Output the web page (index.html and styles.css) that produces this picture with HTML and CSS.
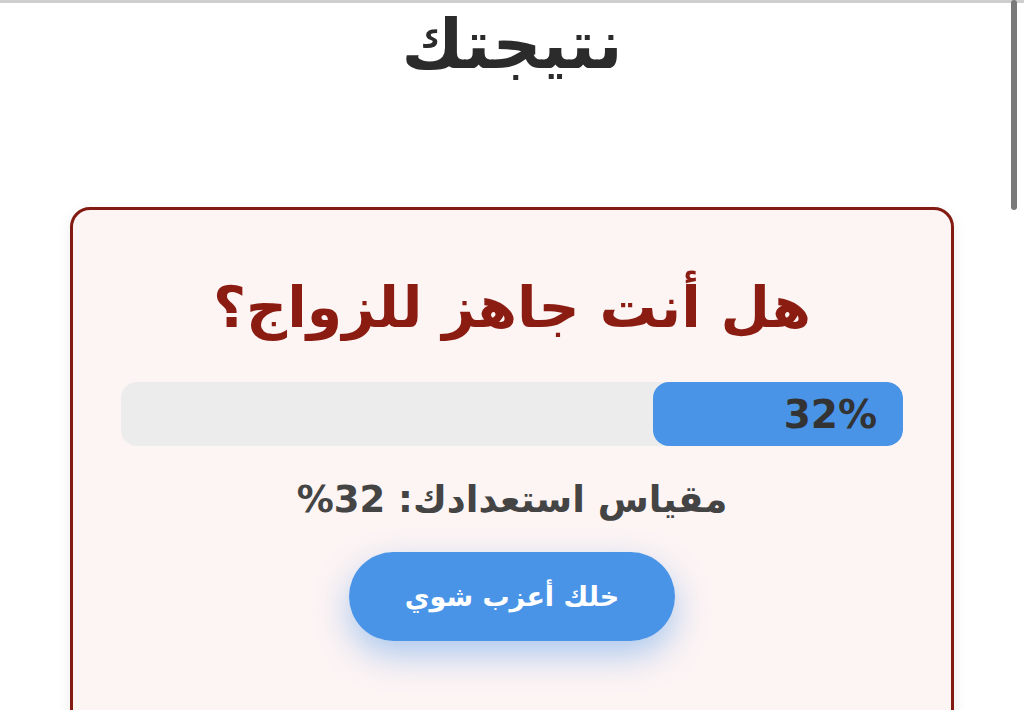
FILE: index.html
```html
<!DOCTYPE html>
<html lang="ar" dir="rtl">
<head>
    <meta charset="UTF-8">
    <meta name="viewport" content="width=device-width, initial-scale=1.0">
    <title>نتيجتك</title>
    <link rel="stylesheet" href="styles.css">
</head>
<body>
    <div class="top-line"></div>
    <div class="scroll-thumb"></div>

    <h1 class="page-title">نتيجتك</h1>

    <div class="result-card">
        <h2 class="question">هل أنت جاهز للزواج؟</h2>

        <div class="progress">
            <div class="progress-fill" style="width: 32%;">32%</div>
        </div>

        <p class="score">مقياس استعدادك: 32%</p>

        <button class="action">خلك أعزب شوي</button>
    </div>
</body>
</html>
```

FILE: styles.css
```css
* {
    margin: 0;
    padding: 0;
    box-sizing: border-box;
    font-family: "DejaVu Sans", "Noto Sans", sans-serif;
}

body {
    background: #fff;
    min-height: 100vh;
    display: flex;
    flex-direction: column;
    align-items: center;
    overflow: hidden;
}

.top-line {
    width: 100%;
    height: 3px;
    background: #cfcfcf;
}

/* overlay scrollbar thumb */
.scroll-thumb {
    position: fixed;
    top: 0;
    right: 7px;
    width: 6px;
    height: 210px;
    background: #7a7a7a;
    border-radius: 3px;
}

.page-title {
    font-size: 68px;
    font-weight: bold;
    color: #2b2b2b;
    margin-top: 4px;
    line-height: 76px;
}

.result-card {
    width: 884px;
    margin-top: 124px;
    background: #fdf4f4;
    border: 3px solid #831a11;
    border-radius: 20px;
    padding: 62px 48px 140px;
    display: flex;
    flex-direction: column;
    align-items: center;
    box-shadow: 0 4px 14px rgba(0, 0, 0, 0.08);
}

.question {
    font-size: 57px;
    font-weight: bold;
    color: #8b1c12;
    line-height: 70px;
}

.progress {
    width: 100%;
    height: 64px;
    margin-top: 40px;
    background: #ececec;
    border-radius: 16px;
    overflow: hidden;
}

.progress-fill {
    height: 100%;
    background: #4a94e8;
    border-radius: 16px;
    color: #333;
    font-size: 39px;
    font-weight: bold;
    display: flex;
    align-items: center;
    justify-content: flex-end;
    padding-right: 26px;
    direction: ltr;
}

.score {
    margin-top: 29px;
    font-size: 37px;
    font-weight: bold;
    color: #444;
    line-height: 50px;
}

.action {
    margin-top: 27px;
    width: 326px;
    height: 89px;
    border: none;
    border-radius: 45px;
    background: #4a94e8;
    color: #fff;
    font-size: 27px;
    font-weight: bold;
    cursor: pointer;
    box-shadow: 0 14px 34px rgba(74, 148, 232, 0.45);
}
```
